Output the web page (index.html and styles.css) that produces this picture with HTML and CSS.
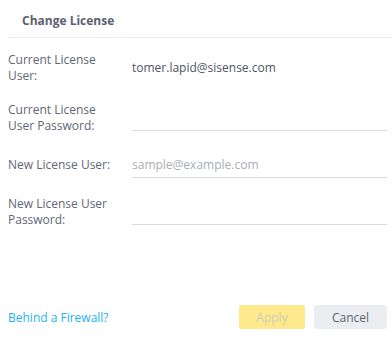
FILE: index.html
```html
<!DOCTYPE html>
<html lang="en">
<head>
    <meta charset="UTF-8">
    <meta name="viewport" content="width=device-width, initial-scale=1.0">
    <title>Change License</title>
    <link rel="stylesheet" href="styles.css">
</head>
<body>
    <div class="dialog">
        <!-- header -->
        <div class="dialog-header">
            <h1>Change License</h1>
        </div>

        <!-- form -->
        <div class="dialog-body">
            <div class="form-row">
                <label>Current License<br>User:</label>
                <div class="value">tomer.lapid@sisense.com</div>
            </div>
            <div class="form-row">
                <label for="currentPassword">Current License<br>User Password:</label>
                <input type="password" id="currentPassword">
            </div>
            <div class="form-row">
                <label for="newUser">New License User:</label>
                <input type="text" id="newUser" placeholder="sample@example.com">
            </div>
            <div class="form-row">
                <label for="newPassword">New License User<br>Password:</label>
                <input type="password" id="newPassword">
            </div>
        </div>

        <!-- footer -->
        <div class="dialog-footer">
            <a href="#" class="firewall-link">Behind a Firewall?</a>
            <div class="buttons">
                <button class="btn btn-apply" disabled>Apply</button>
                <button class="btn btn-cancel">Cancel</button>
            </div>
        </div>
    </div>
</body>
</html>
```

FILE: styles.css
```css
* {
    margin: 0;
    padding: 0;
    box-sizing: border-box;
}

body {
    font-family: "Open Sans", Arial, sans-serif;
    font-size: 12px;
    color: #5b6372;
    background-color: #fff;
}

.dialog {
    display: flex;
    flex-direction: column;
    min-height: 100vh;
}

/* header */
.dialog-header {
    height: 38px;
    margin-left: 8px;
    padding: 13px 0 0 14px;
    border-bottom: 1px solid #e8e9ec;
}

.dialog-header h1 {
    font-size: 12px;
    font-weight: 700;
    line-height: 16px;
    color: #5b6070;
}

/* form */
.dialog-body {
    display: flex;
    flex-direction: column;
    gap: 18px;
    padding: 14px 5px 0 8px;
}

.form-row {
    display: grid;
    grid-template-columns: 124px 1fr;
    align-items: center;
}

.form-row label {
    line-height: 16px;
    color: #5f6676;
}

.form-row .value {
    line-height: 16px;
    color: #4d5463;
}

.form-row input {
    height: 26px;
    border: none;
    border-bottom: 1px solid #d9dbe0;
    font-family: inherit;
    font-size: 12px;
    color: #4d5463;
    outline: none;
    background: transparent;
}

.form-row input::placeholder {
    color: #a9adb6;
}

/* footer */
.dialog-footer {
    margin-top: auto;
    display: flex;
    justify-content: space-between;
    align-items: center;
    padding: 0 5px 9px 8px;
}

.firewall-link {
    color: #1eb2ef;
    text-decoration: none;
}

.buttons {
    display: flex;
    gap: 9px;
}

.btn {
    height: 24px;
    border: none;
    border-radius: 3px;
    font-family: inherit;
    font-size: 12px;
    cursor: pointer;
}

.btn-apply {
    width: 66px;
    background-color: #ffe98c;
    color: #cfcab8;
}

.btn-cancel {
    width: 73px;
    background-color: #ecedf1;
    color: #5b6372;
}
```
